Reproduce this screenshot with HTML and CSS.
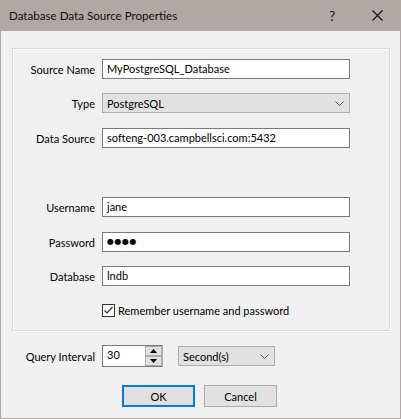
FILE: index.html
```html
<!DOCTYPE html>
<html>
<head>
<meta charset="utf-8">
<link rel="stylesheet" href="styles.css">
</head>
<body>
<div class="window">
  <div class="titlebar">
    <span class="title">Database Data Source Properties</span>
    <span class="help">?</span>
    <svg class="close" width="11" height="11" viewBox="0 0 11 11"><path d="M0.5 0.5 L10.5 10.5 M10.5 0.5 L0.5 10.5" stroke="#111" stroke-width="1.1" fill="none"/></svg>
  </div>
  <div class="content">
    <div class="group">
      <div class="row r1"><label>Source Name</label><div class="field">MyPostgreSQL_Database</div></div>
      <div class="row r2"><label>Type</label><div class="combo wide"><span>PostgreSQL</span><svg width="9" height="5" viewBox="0 0 9 5"><path d="M0.5 0.5 L4.5 4.5 L8.5 0.5" stroke="#555" fill="none"/></svg></div></div>
      <div class="row r3"><label>Data Source</label><div class="field">softeng-003.campbellsci.com:5432</div></div>
      <div class="row r4"><label>Username</label><div class="field">jane</div></div>
      <div class="row r5"><label>Password</label><div class="field pw">●●●●</div></div>
      <div class="row r6"><label>Database</label><div class="field">lndb</div></div>
      <div class="row r7"><span></span><div class="check"><span class="box"><svg width="11" height="11" viewBox="0 0 11 11"><path d="M1.5 5.5 L4 8 L9.5 2" stroke="#333" stroke-width="1.2" fill="none"/></svg></span><span>Remember username and password</span></div></div>
    </div>
    <div class="query">
      <label>Query Interval</label>
      <div class="spin"><span class="val">30</span><div class="btns"><span class="up"><svg width="7" height="4" viewBox="0 0 7 4"><path d="M0 4 L3.5 0 L7 4Z" fill="#000"/></svg></span><span class="down"><svg width="7" height="4" viewBox="0 0 7 4"><path d="M0 0 L3.5 4 L7 0Z" fill="#000"/></svg></span></div></div>
      <div class="combo small"><span>Second(s)</span><svg width="9" height="5" viewBox="0 0 9 5"><path d="M0.5 0.5 L4.5 4.5 L8.5 0.5" stroke="#555" fill="none"/></svg></div>
    </div>
    <div class="buttons">
      <div class="btn ok">OK</div>
      <div class="btn">Cancel</div>
    </div>
  </div>
</div>
</body>
</html>
```

FILE: styles.css
```css
* { box-sizing: border-box; }
html, body { margin: 0; padding: 0; }
body {
  font-family: Lato, "Noto Sans", sans-serif;
  font-size: 11px;
  color: #000;
  background: #f0f0f0;
}
.window {
  width: 401px;
  height: 419px;
  border: 1px solid #b3a7a5;
  border-top: none;
  background: #f0f0f0;
  display: flex;
  flex-direction: column;
}
.titlebar {
  height: 31px;
  margin: 0 -1px;
  background: #b3a7a5;
  display: flex;
  align-items: center;
  padding-left: 9px;
  color: #111;
}
.title { flex: 1; font-size: 11.6px; }
.help { margin-right: 37px; font-size: 13px; }
.close { margin-right: 18px; }
.content {
  padding: 17px 10px 0 11px;
}
.group {
  width: 378px;
  height: 283px;
  border: 1px solid #dcdcdc;
  box-shadow: inset 1px 1px 0 #fff, 1px 1px 0 #fff;
  padding-top: 10px;
}
.row {
  display: grid;
  grid-template-columns: 82px 248px;
  column-gap: 7px;
  align-items: center;
  height: 20px;
}
.row label { text-align: right; }
.r2 { margin-top: 14px; }
.r3 { margin-top: 15px; }
.r4 { margin-top: 49px; }
.r5 { margin-top: 15px; }
.r6 { margin-top: 14px; }
.r7 { margin-top: 14px; }
.field {
  height: 20px;
  border: 1px solid #7a7a7a;
  background: #fff;
  padding: 0 4px;
  line-height: 18px;
  white-space: nowrap;
  overflow: hidden;
}
.pw { font-family: "DejaVu Sans", sans-serif; font-size: 8px; letter-spacing: 0.5px; }
.combo {
  height: 20px;
  border: 1px solid #adadad;
  background: #e1e1e1;
  display: flex;
  align-items: center;
  justify-content: space-between;
  padding: 0 4px 0 4px;
}
.combo svg { margin-right: 1px; }
.check { display: flex; align-items: center; gap: 3px; }
.box {
  width: 13px; height: 13px;
  border: 1px solid #333;
  background: #fff;
  display: flex; align-items: center; justify-content: center;
}
.query {
  display: flex;
  align-items: center;
  margin-top: 14px;
  height: 22px;
}
.query label { width: 83px; text-align: right; margin-right: 7px; }
.spin {
  width: 61px; height: 22px;
  display: flex;
  border: 1px solid #7a7a7a;
  border-right: 1px solid #adadad;
  background: #fff;
}
.spin .val { flex: 1; padding: 0 4px; line-height: 18px; }
.btns { width: 17px; display: flex; flex-direction: column; background: #f0f0f0; }
.btns span {
  flex: 1;
  border: 1px solid #adadad;
  background: #e1e1e1;
  display: flex; align-items: center; justify-content: center;
}
.combo.small { width: 97px; margin-left: 15px; }
.buttons {
  display: flex;
  gap: 9px;
  margin-top: 18px;
  padding-left: 110px;
}
.btn {
  width: 73px; height: 22px;
  border: 1px solid #adadad;
  background: #e1e1e1;
  display: flex; align-items: center; justify-content: center;
}
.btn.ok { border: 2px solid #0078d7; }
```
